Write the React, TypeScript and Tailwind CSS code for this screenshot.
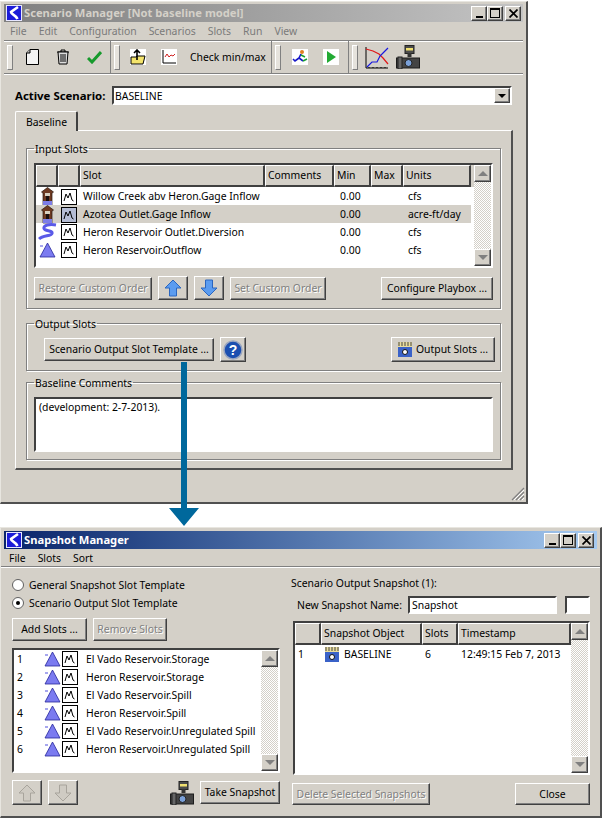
import React from 'react';

const raised = 'border border-t-white border-l-white border-r-[#404040] border-b-[#404040] shadow-[inset_-1px_-1px_0_#808080]';
const btn = `${raised} flex items-center justify-center whitespace-nowrap`;
const sunken = 'border-2 border-t-[#404040] border-l-[#404040] border-r-white border-b-white';
const headCell = 'flex items-center h-full pl-[2px] pb-px border-t border-l border-t-white border-l-white border-r-2 border-r-[#404040] border-b-2 border-b-[#404040]';
const disabledText = 'text-[#808080] [text-shadow:1px_1px_0_#fff]';
const checker = 'bg-[repeating-conic-gradient(#d4d0c8_0_25%,#ffffff_0_50%)] bg-[length:2px_2px]';
const titleText = "font-['Noto_Sans',sans-serif] font-bold text-[11.2px]";

const Logo = () => (
    <svg width="16" height="16" viewBox="0 0 16 16" className="shrink-0">
        <rect x="0.5" y="0.5" width="15" height="15" fill="#1c1cd8" stroke="#e8e8ff" />
        <path d="M12 2 L5 7 C5 9.5 9 9 11.5 14" fill="none" stroke="#ffffff" strokeWidth="2.6" />
    </svg>
);

const WinButtons = () => (
    <div className="flex items-center">
        <div className={`${raised} w-[16px] h-[15px] bg-[#d4d0c8] flex items-end justify-center pb-[2px]`}>
            <div className="w-[7px] h-[2px] bg-black" />
        </div>
        <div className={`${raised} w-[16px] h-[15px] bg-[#d4d0c8] flex items-center justify-center`}>
            <div className="w-[10px] h-[10px] border border-black border-t-2" />
        </div>
        <div className={`${raised} ml-[2px] w-[16px] h-[15px] bg-[#d4d0c8] flex items-center justify-center`}>
            <svg width="9" height="9" viewBox="0 0 9 9">
                <path d="M0.5 0.5 L8.5 8.5 M8.5 0.5 L0.5 8.5" stroke="#000" strokeWidth="1.7" />
            </svg>
        </div>
    </div>
);

const MiniGraph = ({ fill = '#ffffff' }: { fill?: string }) => (
    <svg width="16" height="16" viewBox="0 0 16 16" className="shrink-0">
        <rect x="0.5" y="0.5" width="15" height="15" fill={fill} stroke="#000" />
        <path d="M3 12 L5 5 L7 9 L9 4 L11 11 L12.5 12" fill="none" stroke="#000" />
    </svg>
);

const Gauge = () => (
    <svg width="13" height="19" viewBox="0 0 13 19">
        <path d="M6.5 0.5 L12.5 5 L11 6 L11 18 L2 18 L2 6 L0.5 5 Z" fill="#6e3a22" stroke="#2a1810" strokeWidth="0.7" />
        <rect x="4" y="6" width="5" height="3" fill="#d8d0c0" />
        <rect x="2" y="14" width="9" height="4" fill="#7d7de8" />
        <rect x="5" y="9" width="3" height="5" fill="#1a1010" />
    </svg>
);

const River = () => (
    <svg width="19" height="18" viewBox="0 0 19 18">
        <path d="M18 2 C12 1 5 2 6 5.5 C7 8.5 15 7 14 10.5 C13 13.5 5 12 1 16" fill="none" stroke="#5a5ae8" strokeWidth="3" />
    </svg>
);

const Triangle = () => (
    <svg width="17" height="16" viewBox="0 0 17 16" className="shrink-0">
        <path d="M8.5 1 L16 15 L1 15 Z" fill="#7b7bf0" stroke="#26269a" strokeWidth="0.8" />
        <path d="M1 4 L4 4" stroke="#8a8ae8" strokeWidth="1.5" />
    </svg>
);

const BlockArrow = ({ down, off }: { down?: boolean; off?: boolean }) => (
    <svg width="18" height="18" viewBox="0 0 18 18" className={down ? 'rotate-180' : ''}>
        <path
            d="M9 1 L17 9 L12.5 9 L12.5 17 L5.5 17 L5.5 9 L1 9 Z"
            fill={off ? '#cfcbc3' : '#5b9cf0'}
            stroke={off ? '#a8a49c' : '#2a66c0'}
        />
    </svg>
);

const Camera = () => (
    <svg width="24" height="24" viewBox="0 0 24 24" className="shrink-0">
        <rect x="9" y="0.5" width="9" height="8" fill="#4c4c4c" stroke="#222" />
        <rect x="10" y="3" width="7" height="2.5" fill="#f0e070" />
        <rect x="11.5" y="8" width="4" height="4" fill="#333" />
        <rect x="0.5" y="13" width="23" height="10" fill="#444" stroke="#1c1c1c" />
        <rect x="2" y="12" width="4" height="12" fill="#666" stroke="#222" />
        <circle cx="12.5" cy="18" r="3.5" fill="#7aa0d8" stroke="#222" />
    </svg>
);

const SnapshotIcon = () => (
    <svg width="14" height="15" viewBox="0 0 14 15" className="shrink-0">
        <rect width="14" height="15" fill="#3a62c8" />
        <rect width="14" height="5" fill="#e8dc9c" />
        <path d="M1 0 V4 M4 0 V4 M7 0 V4 M10 0 V4 M13 0 V4" stroke="#444" />
        <circle cx="7" cy="10" r="2.5" fill="#fff" stroke="#111" />
    </svg>
);

const Grip = () => <div className="w-[6px] h-[25px] ml-[3px] shrink-0 border border-white border-r-[#808080] border-b-[#808080] bg-[#e6e3dd]" />;

const Scrollbar = () => (
    <div className={`w-[17px] shrink-0 flex flex-col justify-between ${checker}`}>
        <div className={`${raised} h-[17px] bg-[#d4d0c8] flex items-center justify-center`}>
            <div className="w-0 h-0 border-x-[5px] border-x-transparent border-b-[5px] border-b-[#808080]" />
        </div>
        <div className={`${raised} h-[17px] bg-[#d4d0c8] flex items-center justify-center`}>
            <div className="w-0 h-0 border-x-[5px] border-x-transparent border-t-[5px] border-t-[#808080]" />
        </div>
    </div>
);

const Group = ({ title, className, legendClass, children }: { title: string; className?: string; legendClass?: string; children: React.ReactNode }) => (
    <fieldset className={`border border-[#808080] shadow-[inset_1px_1px_0_#fff,1px_1px_0_#fff] ${className ?? ''}`}>
        <legend className={`px-[1px] h-[14px] leading-[16px] ${legendClass ?? ''}`}>{title}</legend>
        {children}
    </fieldset>
);

const inputSlots = [
    { icon: <Gauge />, name: 'Willow Creek abv Heron.Gage Inflow', units: 'cfs' },
    { icon: <Gauge />, name: 'Azotea Outlet.Gage Inflow', units: 'acre-ft/day', selected: true },
    { icon: <River />, name: 'Heron Reservoir Outlet.Diversion', units: 'cfs' },
    { icon: <Triangle />, name: 'Heron Reservoir.Outflow', units: 'cfs' },
];

const outputSlots = [
    'El Vado Reservoir.Storage',
    'Heron Reservoir.Storage',
    'El Vado Reservoir.Spill',
    'Heron Reservoir.Spill',
    'El Vado Reservoir.Unregulated Spill',
    'Heron Reservoir.Unregulated Spill',
];

const slotCols = 'grid grid-cols-[22px_22px_185px_69px_37px_32px_68px]';
const snapCols = 'grid grid-cols-[26px_101px_36px_113px]';

const ScenarioManager = () => (
    <div className="relative mt-px w-[528px] h-[503px] bg-[#d4d0c8] border border-t-[#e8e6e0] border-l-[#e8e6e0] border-r-2 border-b-2 border-r-[#505050] border-b-[#505050] flex flex-col">
        <div className="mx-[3px] mt-[2px] h-[18px] pl-[2px] pr-[2px] flex items-center justify-between bg-gradient-to-r from-[#808080] to-[#c4c4c4]">
            <div className="flex items-center gap-[2px]">
                <Logo />
                <span className={`${titleText} text-[#d4d0c8]`}>Scenario Manager [Not baseline model]</span>
            </div>
            <WinButtons />
        </div>
        <div className="h-[18px] pt-px flex items-center text-[#7a7a7a] pl-[9px] gap-[12px]">
            <span>File</span><span>Edit</span><span>Configuration</span><span>Scenarios</span><span>Slots</span><span>Run</span><span>View</span>
        </div>
        <div className="mx-[3px] h-[34px] flex items-center border-y border-t-[#808080] border-b-[#808080] shadow-[inset_0_1px_0_#fff,0_1px_0_#fff]">
            <div className="flex items-center w-[107px] h-full border-r border-r-[#808080]">
                <Grip />
                <svg width="13" height="16" viewBox="0 0 13 16" className="ml-[13px]">
                    <path d="M4 0.5 L12.5 0.5 L12.5 15.5 L0.5 15.5 L0.5 4 Z" fill="#f4f4f4" stroke="#000" />
                    <path d="M4 0.5 L4 4 L0.5 4" fill="#bbb" stroke="#000" />
                </svg>
                <svg width="14" height="16" viewBox="0 0 14 16" className="ml-[17px]">
                    <path d="M1 3 H13 M5 3 V1 H9 V3" fill="none" stroke="#000" />
                    <path d="M2 3 L3 15 H11 L12 3 Z" fill="#ddd" stroke="#000" />
                    <path d="M5 5 V13 M7 5 V13 M9 5 V13" stroke="#000" />
                </svg>
                <svg width="15" height="14" viewBox="0 0 15 14" className="ml-[17px]">
                    <path d="M1 8 L5 12 L14 2" fill="none" stroke="#169a2c" strokeWidth="3" />
                </svg>
            </div>
            <div className="flex items-center w-[161px] h-full border-r border-r-[#808080]">
                <Grip />
                <svg width="16" height="16" viewBox="0 0 16 16" className="ml-[10px] bg-white">
                    <path d="M1 8 H6 L7 7 H15 L13 15 H1 Z" fill="#f4e46c" stroke="#000" />
                    <path d="M7 11 V2 M4 4 L7 1 L10 4" fill="none" stroke="#000" strokeWidth="1.6" />
                </svg>
                <svg width="16" height="16" viewBox="0 0 16 16" className="ml-[15px] bg-white">
                    <path d="M2 1 V14 H15" fill="none" stroke="#000" />
                    <path d="M4 8 L6 5 L8 8 L10 6 L12 7 L14 5" fill="none" stroke="#d02020" />
                </svg>
                <span className="ml-[13px] whitespace-nowrap">Check min/max</span>
            </div>
            <div className="flex items-center w-[77px] h-full border-r border-r-[#808080]">
                <Grip />
                <svg width="16" height="16" viewBox="0 0 16 16" className="ml-[11px] bg-white">
                    <circle cx="10" cy="3" r="2" fill="#e08020" />
                    <path d="M9 5 L7 9 L11 12 M7 9 L3 12 L1 10" fill="none" stroke="#1818c8" strokeWidth="1.6" />
                    <path d="M9 6 L13 8 M11 12 L15 10" fill="none" stroke="#18a030" strokeWidth="1.6" />
                </svg>
                <svg width="16" height="16" viewBox="0 0 16 16" className="ml-[15px] bg-white">
                    <path d="M4 2 L13 8 L4 14 Z" fill="#22aa33" />
                </svg>
            </div>
            <Grip />
            <svg width="24" height="23" viewBox="0 0 24 23" className="ml-[7px]">
                <path d="M1 1 V22 H23 M4 22 V21 M8 22 V21 M12 22 V21 M16 22 V21 M20 22 V21" fill="none" stroke="#000" />
                <path d="M1 3 L8 5 L14 8 L18 12 L23 18" fill="none" stroke="#e01818" strokeWidth="1.2" />
                <path d="M2 21 L7 16 L12 16 L15 10 L19 6 L23 2" fill="none" stroke="#1818e0" strokeWidth="1.2" />
            </svg>
            <div className="ml-[7px]"><Camera /></div>
        </div>
        <div className="flex items-center mt-[12px] ml-[14px] mr-[14px]">
            <span className="w-[97px] font-bold text-[11.4px] whitespace-nowrap">Active Scenario:</span>
            <div className={`${sunken} flex-1 h-[19px] bg-white flex items-center justify-between pl-[1px]`}>
                <span className="pt-px">BASELINE</span>
                <div className={`${raised} w-[16px] h-[15px] bg-[#d4d0c8] flex items-center justify-center`}>
                    <div className="w-0 h-0 border-x-[4px] border-x-transparent border-t-[4px] border-t-black" />
                </div>
            </div>
        </div>
        <div className="mt-[6px] ml-[14px] w-[63px] h-[20px] pl-[10px] pt-px flex items-center border-t border-l border-r-2 border-t-white border-l-white border-r-[#404040] rounded-t-[2px] relative z-10 bg-[#d4d0c8]">
            Baseline
        </div>
        <div className="ml-[14px] w-[498px] h-[340px] -mt-px border border-t-white border-l-white border-r-2 border-b-2 border-r-[#505050] border-b-[#505050] px-[10px] pt-[10px]">
            <Group title="Input Slots" className="px-[7px] pt-[8px] pb-[8px]">
                <div className={`${sunken} h-[105px] flex bg-white`}>
                    <div className="flex-1 min-w-0 flex flex-col">
                        <div className="h-[22px] bg-[#d4d0c8]">
                            <div className={`${slotCols} h-full`}>
                                <div className={headCell} />
                                <div className={headCell} />
                                <div className={headCell}>Slot</div>
                                <div className={headCell}>Comments</div>
                                <div className={headCell}>Min</div>
                                <div className={headCell}>Max</div>
                                <div className={headCell}>Units</div>
                            </div>
                        </div>
                        {inputSlots.map((slot, index) => (
                            <div key={index} className={`${slotCols} h-[18px] items-center ${slot.selected ? 'bg-[linear-gradient(#d4d0c8,#d4d0c8)] bg-no-repeat bg-[length:435px_18px]' : ''}`}>
                                <div className="flex justify-center">{slot.icon}</div>
                                <div className="flex justify-center"><MiniGraph fill={slot.selected ? '#b4bcd4' : '#ffffff'} /></div>
                                <span className="pl-[3px] whitespace-nowrap">{slot.name}</span>
                                <span />
                                <span className="pl-[6px]">0.00</span>
                                <span />
                                <span className="pl-[5px]">{slot.units}</span>
                            </div>
                        ))}
                    </div>
                    <Scrollbar />
                </div>
                <div className="flex items-center mt-[8px] h-[24px]">
                    <div className={`${btn} ${disabledText} w-[118px] h-[23px]`}>Restore Custom Order</div>
                    <div className={`${raised} ml-[6px] w-[30px] h-[24px] flex items-center justify-center`}><BlockArrow /></div>
                    <div className={`${raised} ml-[6px] w-[30px] h-[24px] flex items-center justify-center`}><BlockArrow down /></div>
                    <div className={`${btn} ${disabledText} ml-[6px] w-[96px] h-[23px]`}>Set Custom Order</div>
                    <div className={`${btn} ml-auto w-[112px] h-[23px]`}>Configure Playbox ...</div>
                </div>
            </Group>
            <Group title="Output Slots" className="mt-[7px] pl-[17px] pr-[5px] pt-[7px] pb-[8px]" legendClass="-ml-[10px]">
                <div className="flex items-center h-[25px]">
                    <div className={`${btn} w-[170px] h-[23px]`}>Scenario Output Slot Template ...</div>
                    <div className={`${raised} ml-[6px] w-[26px] h-[25px] flex items-center justify-center`}>
                        <svg width="20" height="20" viewBox="0 0 20 20">
                            <circle cx="10" cy="10" r="9" fill="#1c4fb0" stroke="#9aa6c0" strokeWidth="1.5" />
                            <text x="10" y="15" textAnchor="middle" fontSize="14" fontWeight="bold" fill="#fff" fontFamily="Liberation Sans, sans-serif">?</text>
                        </svg>
                    </div>
                    <div className={`${btn} ml-auto w-[104px] h-[25px] gap-[4px]`}>
                        <SnapshotIcon />
                        <span>Output Slots ...</span>
                    </div>
                </div>
            </Group>
            <Group title="Baseline Comments" className="mt-[4px] px-[7px] pt-[8px] pb-[7px]">
                <div className={`${sunken} h-[55px] bg-white px-[3px] pt-[3px]`}>(development: 2-7-2013).</div>
            </Group>
        </div>
        <svg width="14" height="14" viewBox="0 0 14 14" className="absolute right-[1px] bottom-[1px]">
            <path d="M13 1 L1 13 M13 5 L5 13 M13 9 L9 13" stroke="#808080" strokeWidth="1.2" />
            <path d="M13 3 L3 13 M13 7 L7 13 M13 11 L11 13" stroke="#ffffff" />
        </svg>
    </div>
);

const SnapshotManager = () => (
    <div className="mt-[23px] w-[602px] h-[291px] bg-[#d4d0c8] border border-t-[#e8e6e0] border-l-[#e8e6e0] border-r-2 border-b-2 border-r-[#505050] border-b-[#505050] flex flex-col">
        <div className="mx-[3px] mt-[3px] h-[18px] pl-[2px] pr-[3px] flex items-center justify-between bg-gradient-to-r from-[#0a246a] to-[#a6caf0]">
            <div className="flex items-center gap-[2px]">
                <Logo />
                <span className={`${titleText} text-white`}>Snapshot Manager</span>
            </div>
            <WinButtons />
        </div>
        <div className="h-[17px] mt-px pt-px flex items-center pl-[8px] gap-[12px] border-b border-b-[#808080] shadow-[0_1px_0_#fff]">
            <span>File</span><span>Slots</span><span>Sort</span>
        </div>
        <div className="flex-1 flex pt-[9px] pl-[11px] pr-[10px]">
            <div className="w-[268px] shrink-0 flex flex-col">
                {['General Snapshot Slot Template', 'Scenario Output Slot Template'].map((label, index) => (
                    <div key={label} className="h-[18px] flex items-center gap-[5px]">
                        <div className="w-[12px] h-[12px] rounded-full bg-white border border-[#606060] flex items-center justify-center">
                            {index === 1 && <div className="w-[4px] h-[4px] rounded-full bg-black" />}
                        </div>
                        <span>{label}</span>
                    </div>
                ))}
                <div className="flex gap-[6px] mt-[6px]">
                    <div className={`${btn} w-[75px] h-[23px]`}>Add Slots ...</div>
                    <div className={`${btn} ${disabledText} w-[74px] h-[23px]`}>Remove Slots</div>
                </div>
                <div className={`${sunken} mt-[7px] h-[125px] bg-white flex`}>
                    <div className="flex-1 min-w-0">
                        {outputSlots.map((name, index) => (
                            <div key={name} className="h-[18px] flex items-center pl-[3px]">
                                <span className="w-[27px]">{index + 1}</span>
                                <Triangle />
                                <div className="ml-px"><MiniGraph /></div>
                                <span className="ml-[8px] whitespace-nowrap">{name}</span>
                            </div>
                        ))}
                    </div>
                    <Scrollbar />
                </div>
                <div className="flex items-center mt-[7px]">
                    <div className={`${raised} w-[30px] h-[25px] flex items-center justify-center`}><BlockArrow off /></div>
                    <div className={`${raised} ml-[6px] w-[30px] h-[25px] flex items-center justify-center`}><BlockArrow down off /></div>
                    <div className="ml-auto"><Camera /></div>
                    <div className={`${btn} ml-[6px] w-[80px] h-[23px]`}>Take Snapshot</div>
                </div>
            </div>
            <div className="ml-[11px] w-[299px] shrink-0 flex flex-col">
                <div className="h-[14px] leading-[14px]">Scenario Output Snapshot (1):</div>
                <div className="flex items-center mt-[6px] pl-[6px]">
                    <span className="w-[111px] whitespace-nowrap">New Snapshot Name:</span>
                    <div className={`${sunken} w-[149px] h-[18px] bg-white flex items-center pl-[2px]`}>Snapshot</div>
                    <div className={`${sunken} ml-[8px] w-[25px] h-[18px] bg-white`} />
                </div>
                <div className={`${sunken} ml-[2px] mt-[7px] h-[154px] bg-white flex`}>
                    <div className="flex-1 min-w-0 flex flex-col">
                        <div className={`${snapCols} h-[22px] bg-[#d4d0c8]`}>
                            <div className={headCell} />
                            <div className={headCell}>Snapshot Object</div>
                            <div className={headCell}>Slots</div>
                            <div className={headCell}>Timestamp</div>
                        </div>
                        <div className={`${snapCols} h-[18px] items-center`}>
                            <span className="pl-[3px]">1</span>
                            <div className="flex items-center gap-[5px] pl-[4px]">
                                <SnapshotIcon />
                                <span>BASELINE</span>
                            </div>
                            <span className="pl-[3px]">6</span>
                            <span className="pl-[3px] whitespace-nowrap">12:49:15 Feb 7, 2013</span>
                        </div>
                    </div>
                    <Scrollbar />
                </div>
                <div className="flex items-center justify-between mt-[8px] ml-px">
                    <div className={`${btn} ${disabledText} w-[138px] h-[22px]`}>Delete Selected Snapshots</div>
                    <div className={`${btn} w-[75px] h-[22px]`}>Close</div>
                </div>
            </div>
        </div>
    </div>
);

const App: React.FC = () => (
    <div className="relative w-[602px] h-[818px] overflow-hidden bg-white font-['Noto_Sans',sans-serif] text-[10.4px] leading-none text-black">
        <ScenarioManager />
        <SnapshotManager />
        {/* connector between the two dialogs */}
        <svg width="30" height="165" viewBox="0 0 30 165" className="absolute left-[169px] top-[362px]">
            <path d="M12 0 H18 V146 H30 L15 164 L0 146 H12 Z" fill="#00689c" />
        </svg>
    </div>
);

export default App;
